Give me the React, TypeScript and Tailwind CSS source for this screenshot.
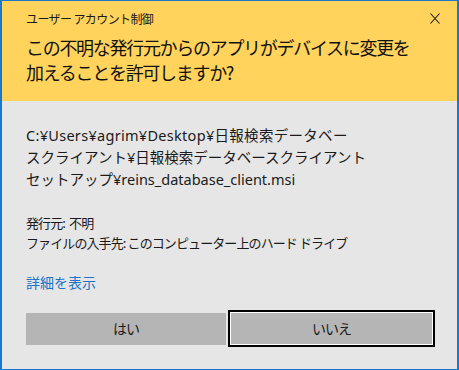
import React from "react";

export default function App() {
  const cjk = { fontFamily: '"Noto Sans CJK JP", "Noto Sans", sans-serif' };
  const mixed = { fontFamily: '"Noto Sans", "Noto Sans CJK JP", sans-serif' };
  return (
    <div
      className="w-[459px] h-[370px] flex flex-col border-x-2 border-y border-[#1a78cc] bg-[#e6e6e6] text-black overflow-hidden"
      style={cjk}
    >
      <div className="bg-[#ffd35c] h-[100px] flex flex-col pl-[24px] pr-[17px]">
        <div className="flex items-start justify-between h-[34px] pt-[9px]">
          <span className="text-[12px] leading-[18px] tracking-[-0.6px] text-[#1a1a1a]">ユーザー アカウント制御</span>
          <svg width="10" height="11" viewBox="0 0 10 11" className="mt-[3px]">
            <path d="M0.5 0.5 L9.5 10.5 M9.5 0.5 L0.5 10.5" stroke="#1a1a1a" strokeWidth="1.1" />
          </svg>
        </div>
        <div className="text-[18px] leading-[25px] tracking-[-1.3px] text-[#111]">
          <div>この不明な発行元からのアプリがデバイスに変更を</div>
          <div>加えることを許可しますか?</div>
        </div>
      </div>
      <div className="flex flex-col pl-[24px] pr-[20px]">
        <div className="mt-[23px] text-[14.5px] leading-[22px] text-[#1a1a1a]" style={mixed}>
          <div className="tracking-[0.3px]">C:¥Users¥agrim¥Desktop¥日報検索データベー</div>
          <div>スクライアント¥日報検索データベースクライアント</div>
          <div>セットアップ¥reins_database_client.msi</div>
        </div>
        <div className="mt-[23px] text-[13px] leading-[20px] tracking-[-0.9px] text-[#1a1a1a]">
          <div>発行元:&nbsp;&nbsp;不明</div>
          <div>ファイルの入手先:&nbsp;このコンピューター上のハード ドライブ</div>
        </div>
        <div className="mt-[19px] text-[14px] leading-[20px] text-[#1a73c8]">詳細を表示</div>
        <div className="mt-[18px] flex items-center">
          <button className="w-[200px] h-[32px] bg-[#b5b5b5] text-[14px] tracking-[-1px] text-[#1a1a1a] flex items-center justify-center">
            はい
          </button>
          <button className="ml-[2px] w-[207px] h-[37px] border-2 border-black bg-[#b5b5b5] text-[14px] tracking-[-1px] text-[#1a1a1a] flex items-center justify-center shadow-[inset_0_0_0_1px_#fff]">
            いいえ
          </button>
        </div>
      </div>
    </div>
  );
}
